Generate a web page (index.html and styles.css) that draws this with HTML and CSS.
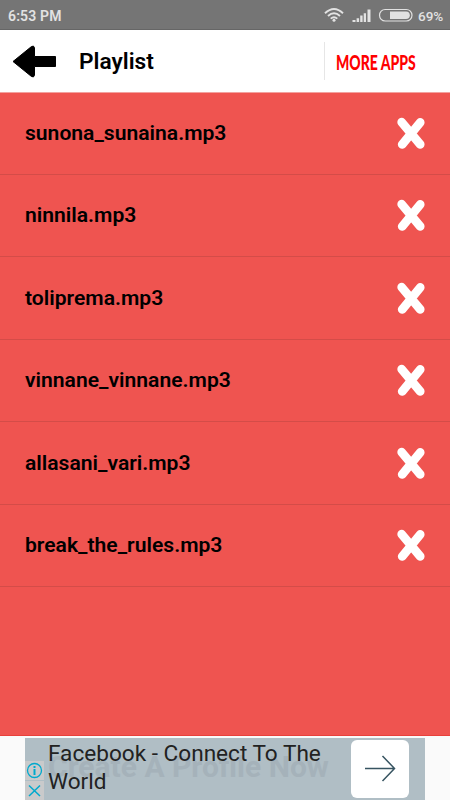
FILE: index.html
```html
<!DOCTYPE html>
<html lang="en">
<head>
<meta charset="utf-8">
<title>Playlist</title>
<link rel="stylesheet" href="styles.css">
</head>
<body>
<svg class="defs" aria-hidden="true"><symbol id="remove" viewBox="0 0 30 34"><path d="M5.700 6.200L24.200 28.400M24.200 6.400L6.200 28.400"/></symbol></svg>
<div class="screen">
  <div class="status">
    <span class="time">6:53 PM</span>
    <svg class="signals" width="92" height="20" viewBox="322 5 92 20">
      <g fill="none" stroke="#e2e2e2" stroke-width="1.900">
        <path d="M325 13.300Q334 4.800 343 13.300M328 16Q334 10.500 340 16M330.700 18.600Q334 15.700 337.300 18.600"/>
      </g>
      <circle cx="334" cy="20.300" r="1.500" fill="#e2e2e2"/>
      <path fill="#e2e2e2" d="M352.500 20h3v2h-3zM356.600 18.300h2.500V22h-2.500zM360.200 15.600h2.400V22h-2.400zM363.700 13.300h2.300V22h-2.300zM367.500 9.500h3V22h-3z"/>
      <rect x="379.500" y="9.500" width="32.500" height="11.500" rx="5.700" fill="none" stroke="#e2e2e2" stroke-width="1.200"/>
      <path fill="#e2e2e2" d="M390 11.500h16a3.800 3.800 0 0 1 0 7.600h-16z"/>
    </svg>
    <span class="percent">69%</span>
  </div>
  <header class="bar">
    <svg class="back" width="46" height="36" viewBox="0 0 46 36"><path d="M2 17.500L20.500 2.500Q23 1 23.500 4V12.500H44.500V22.500H23.500V31Q23 34 20.500 32.500Z" stroke="#000" stroke-linejoin="round"/></svg>
    <h1>Playlist</h1>
    <div class="more"><span>MORE APPS</span></div>
  </header>
  <ul class="list">
    <li><span>sunona_sunaina.mp3</span><svg class="remove"><use href="#remove"/></svg></li>
    <li><span>ninnila.mp3</span><svg class="remove"><use href="#remove"/></svg></li>
    <li><span>toliprema.mp3</span><svg class="remove"><use href="#remove"/></svg></li>
    <li><span>vinnane_vinnane.mp3</span><svg class="remove"><use href="#remove"/></svg></li>
    <li><span>allasani_vari.mp3</span><svg class="remove"><use href="#remove"/></svg></li>
    <li><span>break_the_rules.mp3</span><svg class="remove"><use href="#remove"/></svg></li>
  </ul>
  <footer class="footer">
    <div class="ad">
      <div class="ghost">Create A Profile Now</div>
      <p>Facebook - Connect To The<br>World</p>
      <div class="go"><svg width="32" height="30" viewBox="0 0 32 30" fill="none" stroke="#375461" stroke-width="1.500"><path d="M1 14.500H30.500M18.500 2L30.500 14.500L18.500 27"/></svg></div>
      <div class="choices">
        <svg width="19" height="19" viewBox="0 0 19 19"><circle cx="9.500" cy="9.500" r="7" fill="none" stroke="#00a9cd" stroke-width="1.300"/><path d="M8.500 8h2v6h-2zM8.500 5h2v2h-2z" fill="#00a9cd"/></svg>
        <svg width="19" height="19" viewBox="0 0 19 19"><path d="M4 4.500L15 15M15 4.500L4 15" stroke="#00a9cd" stroke-width="1.500"/></svg>
      </div>
    </div>
  </footer>
</div>
</body>
</html>
```

FILE: styles.css
```css
* { box-sizing: border-box; }
body { margin: 0; font-family: Roboto, sans-serif; }
.defs { display: none; }
.screen { width: 450px; height: 800px; overflow: hidden; display: flex; flex-direction: column; background: #ef5450; }
.status { height: 30px; flex: none; display: flex; align-items: center; padding: 2px 7px 0 8px; background: #757575; border-bottom: 1px solid #666; color: #e2e2e2; font-size: 14px; font-weight: 600; }
.time { flex: 1; letter-spacing: .15px; }
.signals { margin: -1px 4px 0 0; }
.percent { width: 25px; font-size: 13.500px; font-weight: 500; white-space: nowrap; }
.bar { height: 63px; flex: none; display: flex; align-items: center; background: #fff; border-bottom: 1px solid #f3a29f; }
.back { margin: 1px 0 0 11px; }
.bar h1 { flex: 1; margin: 1px 0 0 22px; font-size: 22.700px; line-height: 26px; font-weight: 600; }
.more { width: 126px; height: 38px; display: flex; align-items: center; padding-left: 11px; border-left: 1px solid #e6e6e6; }
.more span { font: 900 20px/30px Lato, sans-serif; color: #f00; white-space: nowrap; transform: scaleX(.7); transform-origin: 0 50%; margin-top: 1px; }
.list { list-style: none; margin: -1px 0 0; padding: 0; flex: 1; }
.list li { height: 82.500px; display: flex; align-items: center; justify-content: space-between; padding: 0 24px 0 25px; border-bottom: 1px solid #d44c48; font-size: 21.100px; font-weight: 600; }
.list li span { margin-top: -1px; }
.remove { width: 30px; height: 34px; fill: none; stroke: #fff; stroke-width: 8.700; stroke-linecap: round; }
.footer { height: 65px; flex: none; display: flex; justify-content: center; background: #fafafa; border-top: 1px solid #e9403b; padding-top: 2px; }
.ad { position: relative; width: 400px; height: 75px; display: flex; justify-content: space-between; align-items: flex-start; padding: 2px 16px 0 23px; background: #b0bec5; }
.ad p { position: relative; margin: 0; font-size: 22.600px; line-height: 28px; color: #222; white-space: nowrap; }
.ghost { position: absolute; left: 23px; top: 11px; font-size: 30px; line-height: 36px; font-weight: 700; color: #a5b2ba; white-space: nowrap; }
.go { width: 58px; height: 58px; background: #fff; border-radius: 6px; display: flex; align-items: center; justify-content: center; }
.choices { position: absolute; left: 0; top: 23px; width: 19px; display: flex; flex-direction: column; gap: 1px; }
.choices svg { background: #c9cacb; }
```
